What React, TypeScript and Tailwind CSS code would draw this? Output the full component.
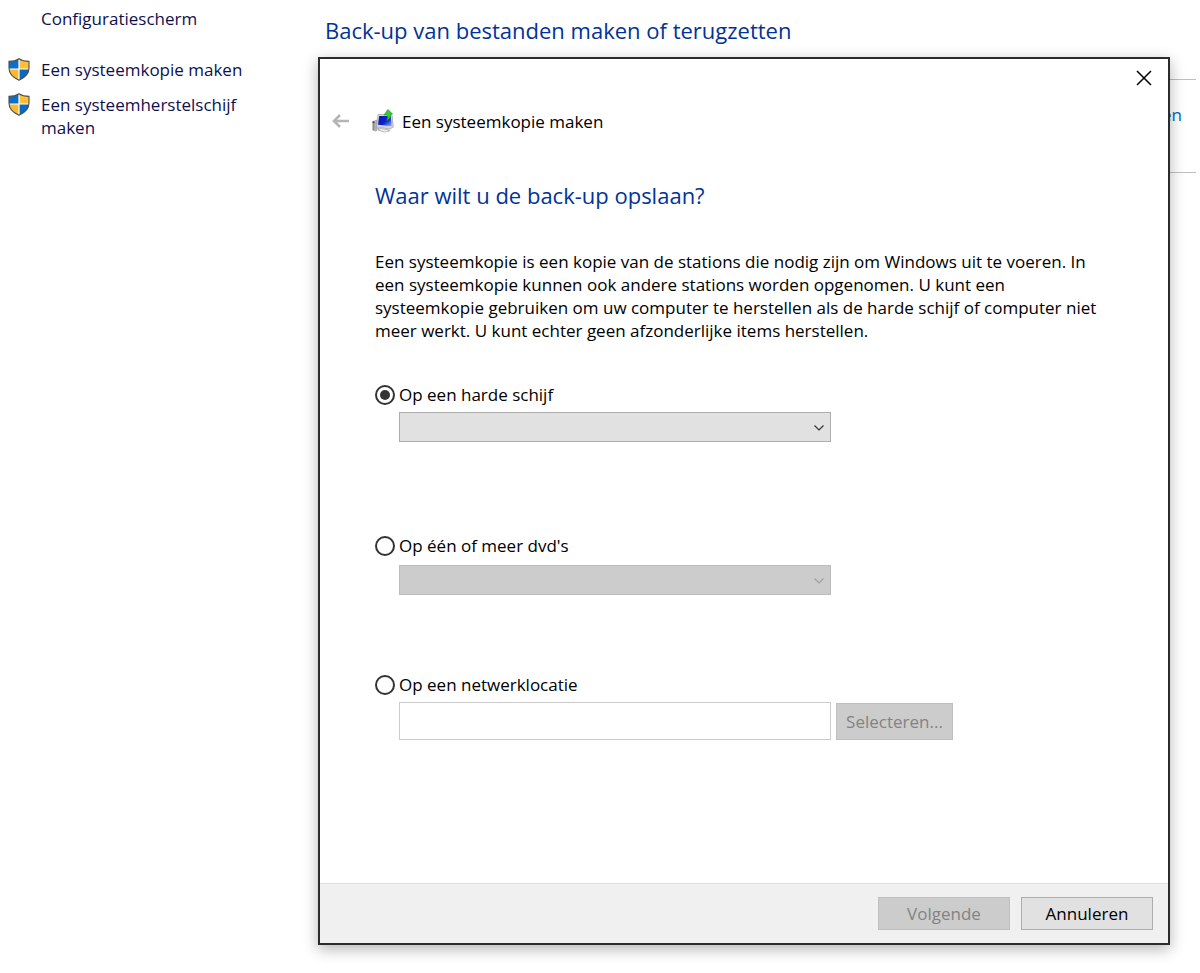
import { useState } from "react";
import type { ReactNode } from "react";
import clsx from "clsx";

const ShieldIcon = () => (
  <svg viewBox="0 0 22 23" className="h-[23px] w-[22px] shrink-0" aria-hidden="true">
    <path d="M11 .8C8.300 2.600 4.800 3.400 1 3.400V10C1 15.700 5 19.600 11 22.200Z" fill="#0d6fc8" />
    <path d="M11 .8C13.700 2.600 17.200 3.400 21 3.400V10C21 15.700 17 19.600 11 22.200Z" fill="#ffc033" />
    <path d="M1 11H11V22.200C5.300 19.700 1.300 16.200 1 11Z" fill="#ffb92e" />
    <path d="M21 11H11V22.200C16.700 19.700 20.700 16.200 21 11Z" fill="#0a68c0" />
    <path d="M11 1V22M1 11H21" stroke="#fff" strokeWidth="1.200" />
    <path
      d="M11 .8C8.300 2.600 4.800 3.400 1 3.400V10C1 15.700 5 19.600 11 22.200C17 19.600 21 15.700 21 10V3.400C17.200 3.400 13.700 2.600 11 .8Z"
      fill="none"
      stroke="#4c4d4f"
      strokeWidth="1.100"
    />
  </svg>
);

const BackupIcon = () => (
  <svg viewBox="0 0 22 24" className="h-6 w-[22px] shrink-0" aria-hidden="true">
    <defs>
      <linearGradient id="screen" x1="0" y1="0" x2="1" y2="1">
        <stop offset="0" stopColor="#0a18a0" />
        <stop offset=".55" stopColor="#0a22d2" />
        <stop offset="1" stopColor="#8fb8f8" />
      </linearGradient>
    </defs>
    <path d="M.8 12.500L5 11V21.500L3.500 22L.8 21Z" fill="#b5b5b5" stroke="#909090" strokeWidth=".5" />
    <path d="M.8 12.500L2.500 13V21.500L.8 21Z" fill="#8d8d8d" />
    <path d="M.6 13.200H2.400" stroke="#222" strokeWidth="1.200" />
    <path d="M5 18.500L17 20.500L18.500 22L13 23.600L6 21.500Z" fill="#b0b0b0" />
    <path d="M7 19.500L15 21L16.500 22L13 22.800L8 21.300Z" fill="#ececec" />
    <path d="M6 5.500L20 5.500L21.300 18L18 20L4.500 18Z" fill="#d4d7dc" stroke="#9b9ea3" strokeWidth=".7" />
    <path d="M7.200 7L18.600 7L19.800 17.200L6 15.700Z" fill="url(#screen)" />
    <path
      d="M16 .5L20.500 5L18.600 5.200C18.800 8 17.500 10.200 14.500 11.500C15.800 9.500 15.800 7.600 15 5.700L12 6Z"
      fill="#35cf2b"
      stroke="#168e1b"
      strokeWidth=".6"
    />
  </svg>
);

const tasks = ["Een systeemkopie maken", "Een systeemherstelschijf maken"];

const Sidebar = () => (
  <nav className="w-[318px] shrink-0 pl-2 pt-[7px] text-[#10104f]">
    <a href="#configuratiescherm" className="ml-[33px] block">
      Configuratiescherm
    </a>
    <ul className="mt-7 flex w-60 flex-col gap-3">
      {tasks.map((task) => (
        <li key={task}>
          <a href="#taak" className="flex items-start gap-[11px]">
            <ShieldIcon />
            {task}
          </a>
        </li>
      ))}
    </ul>
  </nav>
);

interface OptionProps {
  value: string;
  label: string;
  selected: string;
  onSelect: (value: string) => void;
  children: ReactNode;
}

const Option = ({ value, label, selected, onSelect, children }: OptionProps) => (
  <div>
    <label className="flex items-center gap-1">
      <input
        type="radio"
        name="locatie"
        checked={selected === value}
        onChange={() => onSelect(value)}
        className="grid size-5 appearance-none place-items-center rounded-full border-2 border-[#333] bg-white before:size-[10px] before:rounded-full checked:before:bg-[#333]"
      />
      {label}
    </label>
    <div className="pl-6">{children}</div>
  </div>
);

const Dropdown = ({ label, disabled }: { label: string; disabled: boolean }) => (
  <div className="relative w-[432px] max-w-full">
    <select
      aria-label={label}
      disabled={disabled}
      className={clsx(
        "block h-[30px] w-full appearance-none border px-2",
        disabled ? "border-[#bcbcbc] bg-[#cccccc]" : "border-[#adadad] bg-[#e1e1e1]"
      )}
    />
    <svg
      viewBox="0 0 10 6"
      className={clsx(
        "pointer-events-none absolute right-[7px] top-[13px] h-[6px] w-[10px]",
        disabled ? "text-[#a0a0a0]" : "text-[#333]"
      )}
      aria-hidden="true"
    >
      <path d="M.5 .5L5 5L9.500 .5" fill="none" stroke="currentColor" strokeWidth="1.200" />
    </svg>
  </div>
);

const BackupDialog = () => {
  const [location, setLocation] = useState("schijf");

  return (
    <section
      role="dialog"
      aria-labelledby="dialog-title"
      className="z-10 col-start-1 row-start-1 mb-7 mr-[30px] mt-[57px] flex flex-col border-2 border-[#2b2b2e] bg-white shadow-[0_4px_14px_rgba(0,0,0,0.3)]"
    >
      <div className="flex justify-end">
        <button type="button" aria-label="Sluiten" className="grid h-[38px] w-12 place-items-center">
          <svg viewBox="0 0 16 16" className="size-4" aria-hidden="true">
            <path d="M1 1L15 15M15 1L1 15" stroke="#000" strokeWidth="1.500" />
          </svg>
        </button>
      </div>

      <header className="mt-3 flex h-6 items-center pl-3">
        <button type="button" aria-label="Terug" disabled className="mr-[22px]">
          <svg viewBox="0 0 18 14" className="h-[14px] w-[18px]" aria-hidden="true">
            <path d="M17 7H2M8 1L2 7L8 13" fill="none" stroke="#b5b5b5" strokeWidth="2.600" />
          </svg>
        </button>
        <BackupIcon />
        <h2 id="dialog-title" className="ml-2">
          Een systeemkopie maken
        </h2>
      </header>

      <div className="flex-1 px-[55px] pb-8 pt-[46px]">
        <h3 className="text-[22px] leading-8 text-[#003399]">Waar wilt u de back-up opslaan?</h3>
        <p className="mt-[39px]">
          Een systeemkopie is een kopie van de stations die nodig zijn om Windows uit te voeren. In
          <br />
          een systeemkopie kunnen ook andere stations worden opgenomen. U kunt een
          <br />
          systeemkopie gebruiken om uw computer te herstellen als de harde schijf of computer niet
          <br />
          meer werkt. U kunt echter geen afzonderlijke items herstellen.
        </p>

        <div className="mt-[41px]">
          <Option value="schijf" label="Op een harde schijf" selected={location} onSelect={setLocation}>
            <div className="pb-[92px] pt-1.5">
              <Dropdown label="Harde schijf" disabled={location !== "schijf"} />
            </div>
          </Option>
          <Option value="dvd" label="Op één of meer dvd's" selected={location} onSelect={setLocation}>
            <div className="pb-[78px] pt-2">
              <Dropdown label="Dvd-station" disabled={location !== "dvd"} />
            </div>
          </Option>
          <Option value="netwerk" label="Op een netwerklocatie" selected={location} onSelect={setLocation}>
            <div className="flex items-center gap-[5px] pt-1.5">
              <input
                type="text"
                aria-label="Netwerklocatie"
                disabled={location !== "netwerk"}
                className="h-[38px] w-[432px] min-w-0 border border-[#cccccc] bg-white px-2"
              />
              <button
                type="button"
                disabled={location !== "netwerk"}
                className="h-[37px] w-[117px] border border-[#bfbfbf] bg-[#cccccc] text-[#838383]"
              >
                Selecteren...
              </button>
            </div>
          </Option>
        </div>
      </div>

      <footer className="flex justify-end gap-[11px] border-t border-[#dfdfdf] bg-[#f0f0f0] pb-[13px] pr-[15px] pt-[13px]">
        <button
          type="button"
          disabled
          className="h-[33px] w-[132px] border border-[#bfbfbf] bg-[#cccccc] text-[#838383]"
        >
          Volgende
        </button>
        <button type="button" className="h-[33px] w-[132px] border border-[#adadad] bg-[#e1e1e1]">
          Annuleren
        </button>
      </footer>
    </section>
  );
};

export default function App() {
  return (
    <div className="flex min-h-screen bg-white font-['Open_Sans','Noto_Sans',sans-serif] text-[17px] leading-[23px] text-black">
      <Sidebar />
      <main className="grid min-w-0 flex-1">
        <div className="col-start-1 row-start-1 pl-[7px] pr-1 pt-[14px]">
          <h1 className="text-[22px] leading-8 text-[#003399]">
            Back-up van bestanden maken of terugzetten
          </h1>
          <div className="mt-[33px] border-y border-[#bfbfbf] pb-[46px] pr-[14px] pt-[23px] text-right">
            <a href="#instellen" className="text-[#0066cc]">
              Back-up instellen
            </a>
          </div>
        </div>
        <BackupDialog />
      </main>
    </div>
  );
}
